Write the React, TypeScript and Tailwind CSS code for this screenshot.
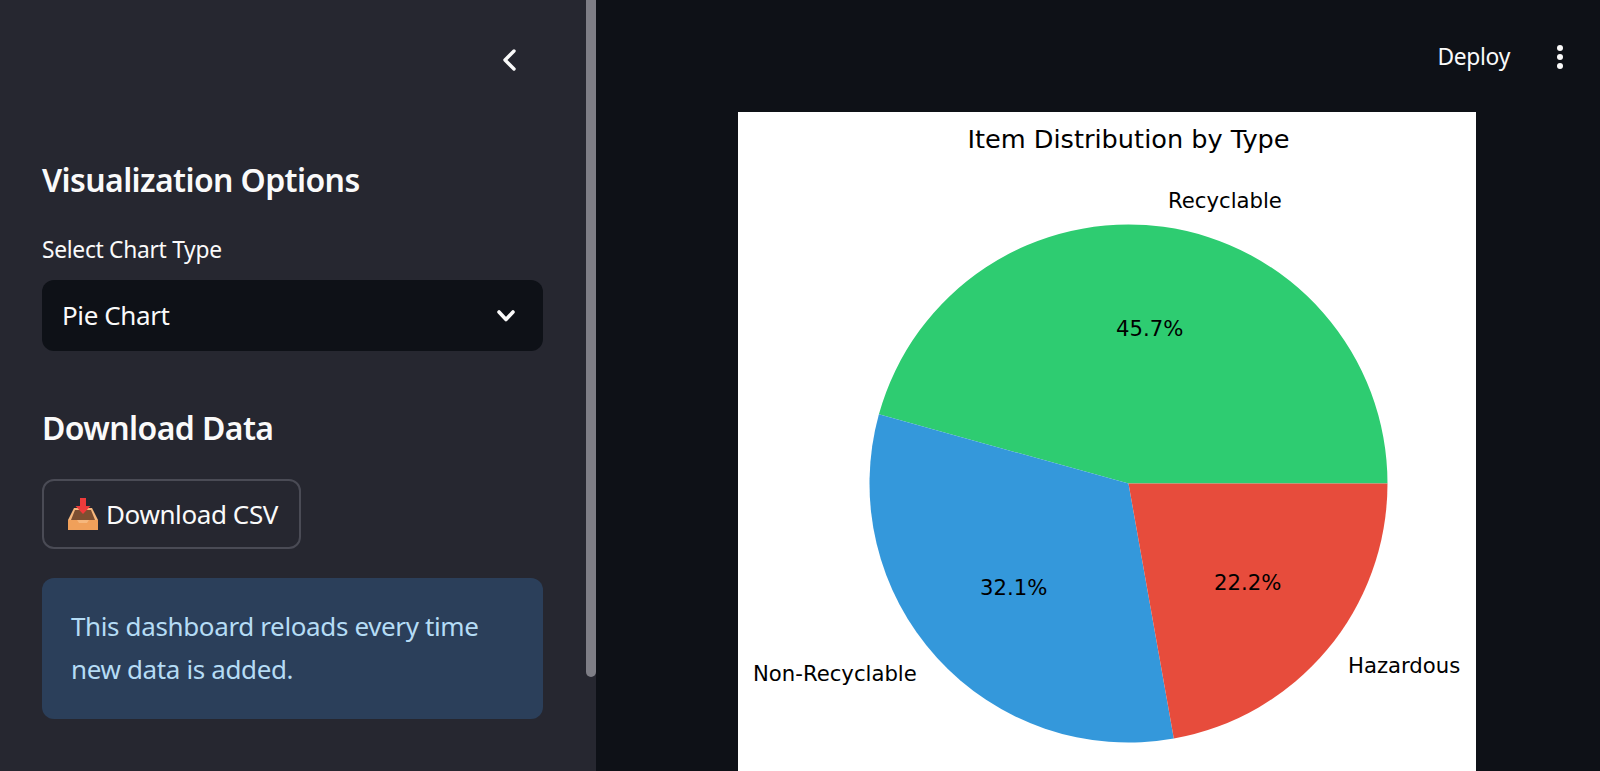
import React from 'react';

const CX = 390.5;
const CY = 371.5;
const R = 259;

type Slice = { from: number; to: number; color: string };

const slices: Slice[] = [
  { from: 0, to: 45.7, color: '#2ecc71' },
  { from: 45.7, to: 77.8, color: '#3498db' },
  { from: 77.8, to: 100, color: '#e74c3c' },
];

const slicePath = (s: Slice) => {
  const a = (s.from / 100) * Math.PI * 2;
  const b = (s.to / 100) * Math.PI * 2;
  const x1 = CX + R * Math.cos(a);
  const y1 = CY - R * Math.sin(a);
  const x2 = CX + R * Math.cos(b);
  const y2 = CY - R * Math.sin(b);
  const large = s.to - s.from > 50 ? 1 : 0;
  return `M${CX} ${CY} L${x1} ${y1} A${R} ${R} 0 ${large} 0 ${x2} ${y2} Z`;
};

const PieChart: React.FC = () => (
  <svg width="738" height="738" viewBox="0 0 738 738" className="block bg-white shrink-0 font-['DejaVu_Sans',sans-serif]">
    {slices.map((s) => (
      <path key={s.color} d={slicePath(s)} fill={s.color} />
    ))}
    <text x="390.5" y="36" textAnchor="middle" fontSize="25.6" fill="#000">Item Distribution by Type</text>
    <text x="430" y="96" fontSize="21.2" fill="#000">Recyclable</text>
    <text x="15" y="569" fontSize="21.2" fill="#000">Non-Recyclable</text>
    <text x="610" y="561" fontSize="21.2" fill="#000">Hazardous</text>
    <text x="378" y="224" fontSize="21.2" fill="#000">45.7%</text>
    <text x="242" y="483" fontSize="21.2" fill="#000">32.1%</text>
    <text x="476" y="478" fontSize="21.2" fill="#000">22.2%</text>
  </svg>
);

const InboxTray: React.FC = () => (
  <svg width="34" height="34" viewBox="0 0 34 34" className="shrink-0">
    <path d="M8 11h18l6 12v10H2V23z" fill="#f6b77c" />
    <path d="M9 13h16l4 10H5z" fill="#7d4f31" />
    <path d="M2 23h9l2 3h8l2-3h9v10H2z" fill="#f0a05a" />
    <path d="M14 1h6v8h4.5L17 17 9.500 9H14z" fill="#ee3b3b" />
  </svg>
);

const App: React.FC = () => {
  return (
    <div className="flex h-[771px] w-full overflow-hidden bg-[#0e1117] font-['Noto_Sans',sans-serif] text-[#fafafa]">
      <aside className="relative flex h-full w-[596px] shrink-0 flex-col bg-[#262730] pl-[42px] pr-[53px]">
        <div className="flex h-[72px] items-end justify-end pr-[25px]">
          <svg width="16" height="24" viewBox="0 0 16 24" fill="none" stroke="#fafafa" strokeWidth="3.4" strokeLinecap="round" strokeLinejoin="round">
            <path d="M12 3 L3 12 L12 21" />
          </svg>
        </div>
        <h2 className="mt-[86px] text-[32px] leading-[44px] font-semibold tracking-[-0.6px]">Visualization Options</h2>
        <label className="mt-[33px] text-[22.8px] leading-[30px] tracking-[-0.3px]">Select Chart Type</label>
        <div className="mt-[15px] flex h-[71px] items-center justify-between rounded-[12px] bg-[#0e1117] pl-[20px] pr-[28px]">
          <span className="text-[26px] tracking-[-0.4px]">Pie Chart</span>
          <svg width="18" height="12" viewBox="0 0 18 12" fill="none" stroke="#fafafa" strokeWidth="3.6" strokeLinecap="round" strokeLinejoin="round">
            <path d="M2 2 L9 9.500 L16 2" />
          </svg>
        </div>
        <h2 className="mt-[55px] text-[32px] leading-[44px] font-semibold tracking-[-0.6px]">Download Data</h2>
        <button className="mt-[29px] flex h-[70px] w-[259px] items-center gap-[6px] rounded-[12px] border-2 border-[#4a4b55] pl-[22px]">
          <InboxTray />
          <span className="text-[26px] tracking-[-0.4px]">Download CSV</span>
        </button>
        <div className="mt-[29px] h-[141px] rounded-[12px] bg-[#2b3f5a] px-[29px] py-[27px] text-[26px] leading-[43px] tracking-[-0.37px] text-[#b5dcf5]">
          This dashboard reloads every time new data is added.
        </div>
        {/* scrollbar thumb */}
        <div className="absolute right-0 top-0 h-[677px] w-[10px] rounded-b-full bg-[#7e7e86]" />
      </aside>
      <main className="flex min-w-0 flex-1 flex-col">
        <header className="flex h-[112px] shrink-0 justify-end pr-[37px] pt-[41px]">
          <span className="text-[22.8px] leading-[32px] tracking-[-0.3px]">Deploy</span>
          <div className="ml-[47px] mt-[4px] flex h-[24px] flex-col justify-between">
            <span className="h-[6px] w-[6px] rounded-full bg-[#fafafa]" />
            <span className="h-[6px] w-[6px] rounded-full bg-[#fafafa]" />
            <span className="h-[6px] w-[6px] rounded-full bg-[#fafafa]" />
          </div>
        </header>
        <div className="flex pl-[142px]">
          <PieChart />
        </div>
      </main>
    </div>
  );
};

export default App;
